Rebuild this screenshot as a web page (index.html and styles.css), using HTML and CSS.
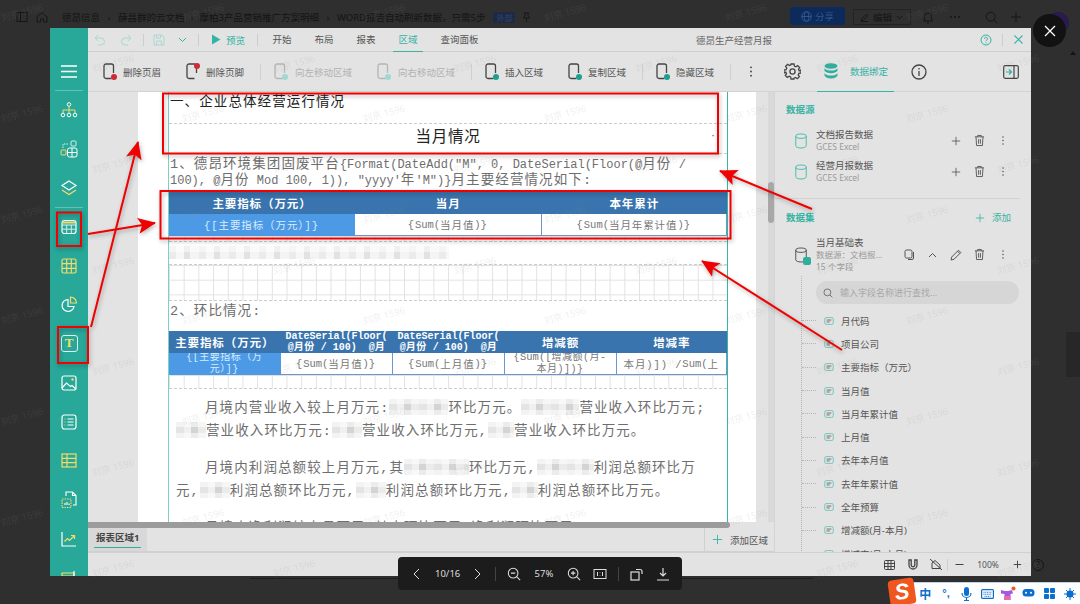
FILE: index.html
```html
<!DOCTYPE html>
<html lang="zh-CN">
<head>
<meta charset="utf-8">
<title>德昂生产经营月报</title>
<link rel="stylesheet" href="styles.css">
</head>
<body>
<svg class="sprite" width="0" height="0" aria-hidden="true">
  <defs>
    <symbol id="db" viewBox="0 0 16 18"><ellipse cx="8" cy="3.5" rx="6" ry="2.5" fill="none" stroke="currentColor"/><path d="M2 3.5v11c0 1.400 2.700 2.500 6 2.500s6-1.100 6-2.500v-11" fill="none" stroke="currentColor"/></symbol>
    <symbol id="plus" viewBox="0 0 12 12"><path d="M6 1v10M1 6h10" stroke="currentColor" fill="none"/></symbol>
    <symbol id="trash" viewBox="0 0 12 14"><path d="M1 3h10M4 3V1.500h4V3M2.200 3l.6 9.500h6.400l.6-9.500M5 5.500v5M7 5.500v5" stroke="currentColor" fill="none"/></symbol>
    <symbol id="dots" viewBox="0 0 4 14"><circle cx="2" cy="2.500" r="1" fill="currentColor"/><circle cx="2" cy="7" r="1" fill="currentColor"/><circle cx="2" cy="11.500" r="1" fill="currentColor"/></symbol>
    <symbol id="field" viewBox="0 0 12 10"><rect x=".7" y=".7" width="10.600" height="8.600" rx="1.800" fill="none" stroke="#5fc0b2"/><path d="M3 3.800h6M3 6.200h4" stroke="#555"/></symbol>
    <symbol id="doc" viewBox="0 0 14 18"><path d="M9 15.500H3.500a2 2 0 0 1-2-2V3a2 2 0 0 1 2-2H9a2 2 0 0 1 2 2v7" fill="none" stroke="currentColor" stroke-width="1.300"/></symbol>
    <symbol id="mag" viewBox="0 0 16 16"><circle cx="7" cy="7" r="5.500" fill="none" stroke="currentColor" stroke-width="1.200"/><path d="M11 11l4 4" stroke="currentColor" stroke-width="1.200"/></symbol>
    <pattern id="wm" width="181" height="101" patternUnits="userSpaceOnUse" x="-23" y="-12">
      <text class="wm-t" x="45" y="28" text-anchor="middle" transform="rotate(-15 45 25)">刘京 1596</text>
      <text class="wm-t" x="136" y="79" text-anchor="middle" transform="rotate(-15 136 76)">刘京 1596</text>
    </pattern>
    <marker id="head" viewBox="0 0 18 16" refX="17" refY="8" markerWidth="18" markerHeight="16" markerUnits="userSpaceOnUse" orient="auto"><path d="M18 8L0 0l4 8-4 8z" fill="#f00000"/></marker>
  </defs>
</svg>

<header class="topbar">
  <div class="top-ic first"><svg width="12" height="12" viewBox="0 0 12 12"><rect x="1" y="1.500" width="10" height="9" fill="none" stroke="#161616"/><path d="M4.500 1.500v9" stroke="#161616"/></svg></div>
  <div class="top-ic"><svg width="12" height="12" viewBox="0 0 12 12"><path d="M1 6l5-4.500L11 6v5H7.500V8h-3v3H1z" fill="none" stroke="#161616"/></svg></div>
  <nav class="crumbs"><span>德昂信息</span><i>›</i><span>薛昌群的云文档</span><i>›</i><span>摩柏3产品营销推广方案明细</span><i>›</i><span>WORD报告自动刷新数据，只需5步</span><b class="tag">外部</b><svg class="pin" width="9" height="10" viewBox="0 0 9 10" fill="none" stroke="#161616"><path d="M2 1h5M3 1v3L1.500 6h6L6 4V1M4.500 6v4"/></svg></nav>
  <div class="top-right">
    <div class="share"><svg width="11" height="11" viewBox="0 0 11 11" fill="none" stroke="#34548a"><circle cx="5.500" cy="5.500" r="4.800"/><ellipse cx="5.500" cy="5.500" rx="2.200" ry="4.800"/><path d="M.7 5.500h9.600"/></svg><span>分享</span></div>
    <div class="edit"><svg width="9" height="9" viewBox="0 0 9 9" fill="none" stroke="#161616"><path d="M1 8l.5-2L6.500 1 8 2.500 3 7.500zM1 8.500h7"/></svg><span>编辑</span><svg width="7" height="5" viewBox="0 0 7 5" fill="none" stroke="#161616"><path d="M1 1l2.500 2.500L6 1"/></svg></div>
    <svg class="bell" width="12" height="13" viewBox="0 0 12 13"><path d="M1.500 10c1-1 1-2.500 1-4.500a3.500 3.500 0 0 1 7 0c0 2 0 3.500 1 4.500zM5 12h2" fill="none" stroke="#161616"/></svg>
    <svg class="tdots" width="12" height="4" viewBox="0 0 12 4"><circle cx="2" cy="2" r="1" fill="#161616"/><circle cx="6" cy="2" r="1" fill="#161616"/><circle cx="10" cy="2" r="1" fill="#161616"/></svg>
    <svg class="tsearch" width="13" height="13"><use href="#mag" color="#161616"/></svg>
    <svg class="tplus" width="12" height="12"><use href="#plus" color="#161616"/></svg>
  </div>
</header>

<div class="avatar"></div>
<div class="closer"><svg width="12" height="12" viewBox="0 0 12 12"><path d="M1 1l10 10M11 1L1 11" stroke="#fff" stroke-width="1.300"/></svg></div>
<div class="side-tri"></div>
<div class="side-strip"></div>
<div class="help-out">?</div>
<div class="under-slider"></div>

<main class="window">
  <aside class="rail">
    <div class="rail-btn menu"><svg width="16" height="13" viewBox="0 0 16 13"><path d="M0 1h16M0 6.500h16M0 12h16" stroke="#fff" stroke-width="1.300"/></svg></div>
    <div class="rail-sep"></div>
    <div class="rail-btn"><svg width="18" height="16" viewBox="0 0 18 16" fill="none" stroke="#fff"><circle cx="9" cy="2.500" r="1.800"/><circle cx="3" cy="13" r="1.800"/><circle cx="9" cy="13" r="1.800"/><circle cx="15" cy="13" r="1.800"/><path d="M9 4.500v6.500M3 11V8h12v3" stroke="#f3dc6b"/></svg></div>
    <div class="rail-btn"><svg width="18" height="18" viewBox="0 0 18 18" fill="none" stroke="#d7efe9"><rect x="1" y="10" width="5" height="5" rx="1" stroke="#f3dc6b"/><rect x="11" y="1" width="5" height="5" rx="1"/><rect x="7.500" y="8" width="9.500" height="9" rx="2" stroke="#fff"/><path d="M12 8v9M7.500 12.500H17" stroke="#fff"/><path d="M3 8V4h5" stroke-dasharray="1.500 1"/></svg></div>
    <div class="rail-btn"><svg width="18" height="18" viewBox="0 0 18 18" fill="none"><path d="M9 2l7 4.500-7 4.500-7-4.500z" stroke="#fff" stroke-width="1.200"/><path d="M2 11l7 4.500 7-4.500" stroke="#f3dc6b" stroke-width="1.200"/></svg></div>
    <div class="rail-sep"></div>
    <div class="rail-btn"><svg width="16" height="16" viewBox="0 0 16 16" fill="none" stroke="#d7efe9"><rect x="1" y="1.500" width="14" height="13" rx="2.500" stroke="#fff" stroke-width="1.200"/><path d="M1 6h14M1 10.200h14M5.700 6v8.500M10.300 6v8.500"/><path d="M1.500 3.500h13" stroke="#f3dc6b" stroke-width="2"/></svg></div>
    <div class="rail-btn"><svg width="16" height="16" viewBox="0 0 16 16" fill="none" stroke="#f3dc6b" stroke-width="1.200"><rect x="1" y="1" width="14" height="14" rx="1.500"/><path d="M1 5.700h14M1 10.300h14M5.700 1v14M10.300 1v14"/></svg></div>
    <div class="rail-btn"><svg width="17" height="17" viewBox="0 0 17 17" fill="none" stroke-width="1.200"><path d="M7 3.500a6 6 0 1 0 6 7H7z" stroke="#fff"/><path d="M9.500 1a6 6 0 0 1 6 6h-6z" stroke="#f3dc6b"/></svg></div>
    <div class="rail-btn"><span class="t-ic">T</span></div>
    <div class="rail-btn"><svg width="16" height="16" viewBox="0 0 16 16" fill="none" stroke="#fff" stroke-width="1.200"><rect x="1" y="1" width="14" height="14" rx="2"/><path d="M1 13l4.500-5 4 3.500 1.500-1 4 3.500"/><circle cx="11.500" cy="4.500" r="1.200" fill="#f3dc6b" stroke="none"/></svg></div>
    <div class="rail-btn"><svg width="16" height="16" viewBox="0 0 16 16" fill="none" stroke="#fff" stroke-width="1.200"><rect x="1" y="1" width="14" height="14" rx="2.500"/><path d="M6.500 5H12.500M6.500 8H12.500M6.500 11H12.500" stroke-width="1"/><path d="M3.500 5h1M3.500 8h1M3.500 11h1" stroke="#f3dc6b"/></svg></div>
    <div class="rail-btn"><svg width="16" height="15" viewBox="0 0 16 15" fill="none" stroke="#f3dc6b" stroke-width="1.200"><rect x="1" y="1" width="14" height="13"/><path d="M1 5.300h14M1 9.700h14M6 1v13" /></svg></div>
    <div class="rail-btn"><svg width="16" height="18" viewBox="0 0 16 18" fill="none" stroke-width="1.100"><path d="M5 5V1h6.500L15 4.500V14h-3M11.500 1v3.500H15" stroke="#fff"/><rect x="1" y="8" width="9" height="8.500" stroke="#f3dc6b" stroke-dasharray="1.500 1"/><path d="M4 14v-2M6 14v-3M8 14v-1.500" stroke="#fff"/></svg></div>
    <div class="rail-btn"><svg width="16" height="16" viewBox="0 0 16 16" fill="none" stroke-width="1.200"><path d="M1 1v14h14" stroke="#fff"/><path d="M3.500 10.500l3-3 2 2 4.500-4.500M10 4.500h3.500V8" stroke="#f3dc6b"/></svg></div>
    <div class="rail-btn"><svg width="16" height="16" viewBox="0 0 16 16" fill="none" stroke-width="1.200"><path d="M1 3h12v3H1z" stroke="#f3dc6b"/><path d="M13 1v14" stroke="#fff"/></svg></div>
  </aside>

  <section class="main">
    <div class="titlebar">
      <span class="ti start dim"><svg width="12" height="12" viewBox="0 0 12 12" fill="none" stroke="currentColor"><path d="M4 1L1 4l3 3M1 4h6a3.500 3.500 0 0 1 0 7H4"/></svg></span>
      <span class="ti gap10 dim"><svg width="12" height="12" viewBox="0 0 12 12" fill="none" stroke="currentColor"><path d="M8 1l3 3-3 3M11 4H5a3.500 3.500 0 0 0 0 7h3"/></svg></span>
      <i class="bar m9"></i>
      <span class="ti gap7 dim"><svg width="12" height="12" viewBox="0 0 12 12" fill="none" stroke="currentColor"><path d="M1 1h8l2 2v8H1zM3.500 1v3h4V1M3.500 11V7h5v4"/></svg></span>
      <span class="ti gap7 teal"><svg width="9" height="6" viewBox="0 0 9 6" fill="none" stroke="currentColor"><path d="M1 1l3.500 3.500L8 1"/></svg></span>
      <i class="bar m8"></i>
      <span class="ti gap9 teal"><svg width="10" height="11" viewBox="0 0 10 11"><path d="M1 .5l8.500 5-8.500 5z" fill="currentColor"/></svg></span>
      <span class="preview">预览</span>
      <i class="bar m12"></i>
      <nav class="menu-tabs"><a>开始</a><a>布局</a><a>报表</a><a class="on">区域</a><a>查询面板</a></nav>
      <div class="doc-title">德昂生产经营月报</div>
      <span class="ti teal"><svg width="12" height="12" viewBox="0 0 12 12" fill="none" stroke="currentColor"><circle cx="6" cy="6" r="5"/><path d="M4.500 4.800a1.500 1.500 0 1 1 2.300 1.200c-.6.400-.8.700-.8 1.200M6 8.300v1"/></svg></span>
      <i class="bar m8"></i>
      <span class="ti gap7 teal"><svg width="9" height="9" viewBox="0 0 9 9"><path d="M.5.500l8 8M8.500.500l-8 8" stroke="currentColor" stroke-width="1.100"/></svg></span>
    </div>

    <div class="toolbar">
      <div class="tool first"><span class="tic dark"><svg width="15" height="18"><use href="#doc"/></svg><b class="bad low"></b></span><span>删除页眉</span></div>
      <div class="tool"><span class="tic dark"><svg width="15" height="18"><use href="#doc"/></svg><b class="bad high"></b></span><span>删除页脚</span></div>
      <i class="sep"></i>
      <div class="tool off wide"><span class="tic"><svg width="15" height="18"><use href="#doc"/></svg><b class="go"></b></span><span>向左移动区域</span></div>
      <div class="tool off wide"><span class="tic"><svg width="15" height="18"><use href="#doc"/></svg><b class="go"></b></span><span>向右移动区域</span></div>
      <i class="sep"></i>
      <div class="tool"><span class="tic dark"><svg width="15" height="18"><use href="#doc"/></svg><b class="ok"></b></span><span>插入区域</span></div>
      <div class="tool"><span class="tic dark"><svg width="15" height="18"><use href="#doc"/></svg><b class="ok"></b></span><span>复制区域</span></div>
      <i class="sep"></i>
      <div class="tool"><span class="tic dark"><svg width="15" height="18"><use href="#doc"/></svg><b class="ok"></b></span><span>隐藏区域</span></div>
      <i class="sep"></i>
      <span class="tic dark more"><svg width="4" height="13"><use href="#dots"/></svg></span>
      <span class="tic dark gear"><svg width="17" height="17" viewBox="0 0 17 17" fill="none" stroke="currentColor" stroke-width="1.300"><path d="M7 1h3l.4 2.100 1.500.7 1.800-1.200 2 2-1.200 1.800.7 1.500L17 7v3l-2.100.4-.7 1.500 1.200 1.800-2 2-1.800-1.200-1.500.7L10 16H7l-.4-2.100-1.500-.7-1.800 1.200-2-2 1.200-1.800-.7-1.500L0 10V7l2.100-.4.7-1.500-1.200-1.800 2-2 1.800 1.200 1.500-.7z"/><circle cx="8.500" cy="8.500" r="2.600"/></svg></span>
      <div class="bind"><svg width="14" height="16" viewBox="0 0 14 16"><ellipse cx="7" cy="3" rx="6.500" ry="2.800" fill="#2fae9e"/><path d="M.5 5.200c1 1.600 3.500 2.300 6.500 2.300s5.500-.7 6.500-2.300v2.600c-1 1.600-3.500 2.400-6.500 2.400S1.500 9.400.5 7.800zM.5 10.200c1 1.600 3.500 2.300 6.500 2.300s5.500-.7 6.500-2.300v2.600C12.500 14.400 10 15.500 7 15.500s-5.500-1.100-6.500-2.700z" fill="#2fae9e"/></svg><span>数据绑定</span></div>
      <span class="tic dark info"><svg width="16" height="16" viewBox="0 0 16 16" fill="none" stroke="currentColor" stroke-width="1.300"><circle cx="8" cy="8" r="7"/><path d="M8 7v5M8 4v1.500"/></svg></span>
      <span class="tic dark toggle"><svg width="16" height="14" viewBox="0 0 16 14" fill="none" stroke="currentColor" stroke-width="1.200"><rect x=".7" y=".7" width="14.600" height="12.600" rx="1.500"/><path d="M11 1v12"/><path d="M3 7h5M6 4.500L8.500 7 6 9.500" stroke="#2fae9e"/></svg></span>
    </div>

    <div class="workspace">
      <div class="left">
        <div class="canvas">
          <div class="page">
            <div class="region">
              <div class="row-h1">一、企业总体经营运行情况</div>
              <div class="row-h2">当月情况<span class="ell">··</span></div>
              <div class="formula">
                <div>1、德昂环境集团固废平台<span class="m">{Format(DateAdd("M", 0, DateSerial(Floor(@</span>月份<span class="m"> /</span></div>
                <div><span class="m">100), @</span>月份<span class="m"> Mod 100, 1)), "yyyy'</span>年<span class="m">'M")}</span>月主要经营情况如下:</div>
              </div>
              <div class="tbl t3">
                <div class="th">主要指标（万元）</div><div class="th">当月</div><div class="th">本年累计</div>
                <div class="td first-col">{[主要指标（万元）]}</div>
                <div class="td">{<span class="m">Sum(</span>当月值<span class="m">)</span>}</div>
                <div class="td">{<span class="m">Sum(</span>当月年累计值<span class="m">)</span>}</div>
              </div>
              <div class="grid g-short"></div>
              <div class="blur-row"><span class="mosaic"></span></div>
              <div class="grid g-tall"></div>
              <div class="row-plain">2、环比情况:</div>
              <div class="tbl t5">
                <div class="th">主要指标（万元）</div>
                <div class="th tight"><div><span class="m">DateSerial(Floor(</span><br><span class="m">@</span>月份<span class="m"> / 100)  @</span>月</div></div>
                <div class="th tight"><div><span class="m">DateSerial(Floor(</span><br><span class="m">@</span>月份<span class="m"> / 100)  @</span>月</div></div>
                <div class="th">增减额</div><div class="th">增减率</div>
                <div class="td first-col tight"><div>{[主要指标（万<br>元）]}</div></div>
                <div class="td">{<span class="m">Sum(</span>当月值<span class="m">)</span>}</div>
                <div class="td">{<span class="m">Sum(</span>上月值<span class="m">)</span>}</div>
                <div class="td tight"><div>{<span class="m">Sum([</span>增减额(月-<br>本月)])}</div></div>
                <div class="td">本月)]) / <span class="m">Sum(</span>上</div>
              </div>
              <div class="grid g-mini"></div>
              <div class="para">
                <div class="ln ind">月境内营业收入较上月万元:<span class="blur w59"></span>环比万元。<span class="blur w58"></span>营业收入环比万元;</div>
                <div class="ln"><span class="blur w30"></span>营业收入环比万元:<span class="blur w30"></span>营业收入环比万元,<span class="blur w26"></span>营业收入环比万元。</div>
              </div>
              <div class="para">
                <div class="ln ind">月境内利润总额较上月万元,其<span class="blur w65"></span>环比万元,<span class="blur w57"></span>利润总额环比万</div>
                <div class="ln">元,<span class="blur w30"></span>利润总额环比万元,<span class="blur w30"></span>利润总额环比万元,<span class="blur w26"></span>利润总额环比万元。</div>
              </div>
              <div class="para">
                <div class="ln ind">月境内净利润较上月万元,其中环比万元,净利润环比万元</div>
              </div>
            </div>
          </div>
          <div class="vscroll"><i></i></div>
        </div>
        <div class="hscroll"></div>
        <div class="tabs">
          <div class="tab">报表区域1</div>
          <div class="add"><svg width="11" height="11"><use href="#plus"/></svg><span>添加区域</span></div>
        </div>
      </div>

      <aside class="panel">
        <div class="p-head">数据源</div>
        <div class="src first">
          <svg class="p-db" width="14" height="16"><use href="#db"/></svg>
          <div class="src-t"><strong>文档报告数据</strong><small>GCES Excel</small></div>
          <div class="acts"><span><svg width="10" height="10"><use href="#plus"/></svg></span><span><svg width="11" height="13"><use href="#trash"/></svg></span><span><svg width="4" height="11"><use href="#dots"/></svg></span></div>
        </div>
        <div class="src">
          <svg class="p-db" width="14" height="16"><use href="#db"/></svg>
          <div class="src-t"><strong>经营月报数据</strong><small>GCES Excel</small></div>
          <div class="acts"><span><svg width="10" height="10"><use href="#plus"/></svg></span><span><svg width="11" height="13"><use href="#trash"/></svg></span><span><svg width="4" height="11"><use href="#dots"/></svg></span></div>
        </div>
        <div class="p-rule"></div>
        <div class="p-head split"><span>数据集</span><span class="p-add"><svg width="10" height="10"><use href="#plus"/></svg>添加</span></div>
        <div class="set">
          <span class="set-ic"><svg width="14" height="16"><use href="#db"/></svg><b></b></span>
          <div class="src-t"><strong>当月基础表</strong><small>数据源：文档报...</small><small>15 个字段</small></div>
          <div class="acts five">
            <span><svg width="11" height="11" viewBox="0 0 11 11" fill="none" stroke="currentColor"><rect x="1" y="1" width="7" height="8" rx="1.500"/><path d="M9.500 3v6a1.500 1.500 0 0 1-1.500 1.500H4"/></svg></span>
            <span><svg width="9" height="6" viewBox="0 0 9 6" fill="none" stroke="currentColor"><path d="M1 5l3.500-3.500L8 5"/></svg></span>
            <span><svg width="12" height="12" viewBox="0 0 12 12" fill="none" stroke="currentColor"><path d="M1 11l.7-3L8.500 1.200l2.300 2.300L4 10.300zM7.500 2.200l2.300 2.300"/></svg></span>
            <span><svg width="11" height="13"><use href="#trash"/></svg></span>
            <span><svg width="4" height="11"><use href="#dots"/></svg></span>
          </div>
        </div>
        <div class="tree">
          <div class="search"><svg width="10" height="10"><use href="#mag"/></svg><span>输入字段名称进行查找...</span></div>
          <ul class="fields">
            <li><i></i><svg width="10" height="8"><use href="#field"/></svg>月代码</li>
            <li><i></i><svg width="10" height="8"><use href="#field"/></svg>项目公司</li>
            <li><i></i><svg width="10" height="8"><use href="#field"/></svg>主要指标（万元）</li>
            <li><i></i><svg width="10" height="8"><use href="#field"/></svg>当月值</li>
            <li><i></i><svg width="10" height="8"><use href="#field"/></svg>当月年累计值</li>
            <li><i></i><svg width="10" height="8"><use href="#field"/></svg>上月值</li>
            <li><i></i><svg width="10" height="8"><use href="#field"/></svg>去年本月值</li>
            <li><i></i><svg width="10" height="8"><use href="#field"/></svg>去年年累计值</li>
            <li><i></i><svg width="10" height="8"><use href="#field"/></svg>全年预算</li>
            <li><i></i><svg width="10" height="8"><use href="#field"/></svg>增减额(月-本月)</li>
            <li><i></i><svg width="10" height="8"><use href="#field"/></svg>增减率(月-本月)</li>
          </ul>
        </div>
      </aside>
    </div>

    <div class="status">
      <span class="st"><svg width="11" height="10" viewBox="0 0 11 10" fill="none" stroke="#444"><rect x=".5" y=".5" width="10" height="9" rx="1"/><path d="M.5 3.500h10M.5 6.500h10M4 .5v9M7 .5v9"/></svg></span>
      <span class="st"><svg width="10" height="11" viewBox="0 0 10 11" fill="none" stroke="#444" stroke-width="1.300"><path d="M1 1v5a4 4 0 0 0 8 0V1H6.800v5a1.800 1.800 0 0 1-3.600 0V1z"/></svg></span>
      <span class="st"><svg width="12" height="11" viewBox="0 0 12 11" fill="none" stroke="#444"><path d="M2 9.500h8V6L5 1.500 2 4zM0 0l12 11"/></svg></span>
      <i class="st-sep"></i>
      <span class="st small"><svg width="9" height="9"><path d="M.5 4.500h8" stroke="#444"/></svg></span>
      <span class="pct">100%</span>
      <span class="st small"><svg width="9" height="9" viewBox="0 0 12 12"><path d="M6 1v10M1 6h10" stroke="#444" stroke-width="1.300"/></svg></span>
    </div>
  </section>
</main>

<svg class="overlay" width="1080" height="604" viewBox="0 0 1080 604" aria-hidden="true">
  <rect width="1080" height="604" fill="url(#wm)"/>
  <g class="marks" fill="none" stroke="#f00000" stroke-width="2">
    <rect x="163" y="93.500" width="555" height="60"/>
    <rect x="160.500" y="191" width="570" height="47.500"/>
    <rect x="57" y="212.500" width="24" height="33.500"/>
    <rect x="58" y="327" width="30" height="36"/>
    <path d="M91 327L138 142" marker-end="url(#head)"/>
    <path d="M88 234L155 223" marker-end="url(#head)"/>
    <path d="M812 209L720 171" marker-end="url(#head)"/>
    <path d="M842 350L702 261" marker-end="url(#head)"/>
  </g>
</svg>

<div class="viewer">
  <svg width="16" height="12" viewBox="0 0 16 12" fill="none" stroke="#ddd"><path d="M10 1L5 6l5 5"/></svg>
  <span class="pg">10/16</span>
  <svg width="16" height="12" viewBox="0 0 16 12" fill="none" stroke="#ddd"><path d="M6 1l5 5-5 5"/></svg>
  <i></i>
  <svg width="16" height="14" viewBox="0 0 16 16" fill="none" stroke="#ddd" stroke-width="1.200"><circle cx="7" cy="7" r="5.500"/><path d="M11 11l4 4M4.500 7h5"/></svg>
  <span class="pct2">57%</span>
  <svg width="16" height="14" viewBox="0 0 16 16" fill="none" stroke="#ddd" stroke-width="1.200"><circle cx="7" cy="7" r="5.500"/><path d="M11 11l4 4M4.500 7h5M7 4.500v5"/></svg>
  <svg width="16" height="12" viewBox="0 0 16 12" fill="none" stroke="#ddd"><rect x="2" y="1.500" width="12" height="9"/><path d="M5.500 4v4M8 4.500v.5M8 7v.5M10.500 4v4"/></svg>
  <i></i>
  <svg width="16" height="14" viewBox="0 0 16 14" fill="none" stroke="#ddd" stroke-width="1.200"><rect x="2" y="5" width="8" height="8"/><path d="M7 2.500h4a2 2 0 0 1 2 2V7"/></svg>
  <svg width="16" height="14" viewBox="0 0 16 14" fill="none" stroke="#ddd" stroke-width="1.200"><path d="M8 1v8M5 6l3 3 3-3M2 13h12"/></svg>
</div>

<div class="ime">
  <span class="s-logo">S</span>
  <span class="zh">中</span>
  <span class="punc">°,</span>
  <svg width="11" height="14" viewBox="0 0 11 14"><rect x="3" y="0" width="5" height="9" rx="2.500" fill="#0b6fd0"/><path d="M1 6a4.500 4.500 0 0 0 9 0M5.500 11v2.500M3 13.500h5" fill="none" stroke="#0b6fd0" stroke-width="1.200"/></svg>
  <svg width="13" height="10" viewBox="0 0 13 10"><rect x=".6" y=".6" width="11.800" height="8.800" rx="1" fill="none" stroke="#0b6fd0" stroke-width="1.200"/><path d="M2.500 3.200h8M2.500 5.200h8M3.500 7.300h6" stroke="#0b6fd0" stroke-dasharray="1 .7"/></svg>
  <svg width="16" height="15" viewBox="0 0 16 15"><path d="M1 4l3.500 1h4L12 4l1 3.500-2.500.5v6h-6V8L1 7.500z" fill="#a45ae0"/><path d="M4 10h6.500v4H4z" fill="#e66bb0"/><circle cx="13.500" cy="2.500" r="2" fill="#f0561d"/></svg>
  <svg width="13" height="11" viewBox="0 0 13 11"><rect x=".5" y="1" width="12" height="7.500" rx="3.500" fill="#0b6fd0"/><circle cx="4" cy="4.700" r="1" fill="#fff"/><circle cx="9" cy="4.700" r="1" fill="#fff"/></svg>
  <svg width="11" height="11" viewBox="0 0 11 11"><rect width="5" height="5" rx="1" fill="#0b6fd0"/><rect x="6" width="5" height="5" rx="1" fill="#0b6fd0"/><rect y="6" width="5" height="5" rx="1" fill="#0b6fd0"/><rect x="6" y="6" width="5" height="5" rx="1" fill="#0b6fd0"/></svg>
  <svg width="12" height="12" viewBox="0 0 12 12"><circle cx="6" cy="6" r="3.500" fill="#0b6fd0"/><path d="M6 0v12M0 6h12M2 2l8 8M10 2l-8 8" stroke="#0b6fd0"/></svg>
</div>
</body>
</html>
```

FILE: styles.css
```css
* { box-sizing: border-box; }
html, body { margin: 0; padding: 0; }
body {
  width: 1080px; height: 604px; overflow: hidden; position: relative;
  background: #2f2f2f;
  font-family: "Noto Sans", "Noto Sans CJK SC", sans-serif;
  font-size: 9.5px; color: #555;
}
.sprite { position: absolute; }
.wm-t { font-size: 9.500px; fill: #808080; fill-opacity: .13; font-family: "Noto Sans", "Noto Sans CJK SC", sans-serif; }

/* dimmed page behind the viewer */
.topbar { height: 28px; display: flex; align-items: center; padding-top: 6px; color: #141414; }
.top-ic { width: 20px; display: flex; justify-content: center; }
.top-ic.first { margin-left: 12px; }
.crumbs { margin-left: 10px; display: flex; align-items: center; white-space: nowrap; }
.crumbs i { font-style: normal; width: 18px; text-align: center; }
.crumbs i:nth-of-type(2) { width: 15px; }
.tag { margin-left: 8px; padding: 0 3px; background: #1e2a44; color: #2d4470; font-weight: 400; font-size: 8px; border-radius: 2px; }
.pin { margin-left: 7px; }
.top-right { margin-left: auto; display: flex; align-items: center; }
.share { width: 55px; height: 18px; margin-top: -2px; background: #0c2a5c; color: #34548a; border-radius: 3px; display: flex; align-items: center; gap: 3px; padding-left: 11px; }
.edit { width: 58px; height: 16px; margin-left: 8px; border: 1px solid #242424; display: flex; align-items: center; gap: 4px; padding-left: 6px; }
.bell { margin-left: 11px; }
.tdots { margin-left: 15px; }
.tsearch { margin-left: 24px; }
.tplus { margin-left: 12px; margin-right: 58px; }
.avatar { position: absolute; left: 1047px; top: 12px; width: 22px; height: 22px; border-radius: 50%; background: #2a1a4e; }
.closer { position: absolute; left: 1033px; top: 14px; width: 33px; height: 33px; border-radius: 50%; background: #121212; display: flex; align-items: center; justify-content: center; }
.side-tri { position: absolute; left: 1070px; top: 51px; border: 3.5px solid transparent; border-top: 0; border-bottom: 4px solid #141414; }
.side-strip { position: absolute; left: 1066px; top: 332px; width: 14px; height: 45px; background: #272727; }
.help-out { position: absolute; left: 1032px; top: 559px; width: 12px; height: 12px; border: 1px solid #151515; border-radius: 50%; color: #151515; font-size: 8px; line-height: 10px; text-align: center; }
.under-slider { position: absolute; left: 250px; top: 578px; width: 563px; height: 1px; background: #1e1e1e; }

/* editor window */
.window { position: absolute; left: 50px; top: 28px; width: 981px; height: 548px; display: flex; overflow: hidden; background: #e3e3e3; }
.rail { width: 38px; flex: none; background: #27a899; padding-top: 24px; overflow: hidden; }
.rail-btn { height: 39px; display: flex; align-items: center; justify-content: center; }
.rail-btn.menu { height: 38px; }
.rail-sep { height: 1px; margin: 0 5px -1px; background: rgba(255,255,255,.28); }
.t-ic { width: 17px; height: 17px; border: 1.200px solid #e4f3f0; border-radius: 3px; color: #f3dc6b; font: 700 13px/14px "Liberation Serif", serif; text-align: center; }

.main { flex: 1; min-width: 0; display: flex; flex-direction: column; }
.titlebar { height: 24px; flex: none; display: flex; align-items: center; padding-left: 4px; padding-right: 5px; border-bottom: 1px solid #cfcfcf; }
.ti { width: 16px; height: 16px; display: flex; align-items: center; justify-content: center; flex: none; }
.dim { color: #a9d8d1; }
.teal { color: #35b3a3; }
.gap10 { margin-left: 10px; }
.gap7 { margin-left: 7px; }
.gap9 { margin-left: 9px; }
.bar { width: 1px; height: 12px; background: #cdcdcd; flex: none; }
.m9 { margin-left: 9px; }
.m8 { margin-left: 8px; }
.m12 { margin-left: 12px; }
.preview { margin-left: 2px; color: #35b3a3; }
.menu-tabs { display: flex; gap: 12px; margin-left: 9px; height: 24px; }
.menu-tabs a { padding: 0 5.500px; line-height: 23px; white-space: nowrap; }
.menu-tabs a.on { color: #35b3a3; border-bottom: 1.500px solid #35b3a3; }
.doc-title { flex: 1; text-align: center; padding-left: 6px; color: #666; }

.toolbar { height: 40px; flex: none; display: flex; align-items: center; padding-left: 11px; border-bottom: 1px solid #d2d2d2; }
.tool { display: flex; align-items: center; gap: 4px; margin-left: 21px; white-space: nowrap; }
.tool.first { margin-left: 0; }
.tool.wide { gap: 5px; }
.tool.off { color: #b2b2b2; }
.sep { width: 1px; height: 16px; background: #d0d0d0; margin-left: 16px; flex: none; }
.sep + .tool { margin-left: 9px; }
.tic { position: relative; width: 20px; height: 20px; display: flex; align-items: center; justify-content: center; flex: none; color: #b5b5b5; }
.tic.dark { color: #444; }
.tic b { position: absolute; width: 6px; height: 6px; border-radius: 50%; right: 2px; bottom: 2px; }
.tic .bad { background: #d02a33; }
.tic .bad.high { top: 1px; bottom: auto; }
.tic .go { background: #9fd9d1; }
.tic .ok { background: #1f9d8f; }
.more { margin-left: 10px; }
.gear { margin-left: 21px; }
.bind { margin-left: 15px; width: 77px; height: 40px; display: flex; align-items: center; gap: 12px; padding-left: 7px; color: #35b3a3; border-bottom: 1.500px solid #35b3a3; }
.info { margin-left: 15px; }
.toggle { margin-left: auto; margin-right: 10px; }

.workspace { flex: 1; min-height: 0; display: flex; }
.left { width: 686px; flex: none; display: flex; flex-direction: column; }
.canvas { flex: 1; min-height: 0; display: flex; overflow: hidden; }
.page { width: 618px; margin-left: 50px; background: #fff; padding-left: 30px; overflow: hidden; flex: none; }
.vscroll { margin-left: auto; width: 6px; background: #d9d9d9; position: relative; }
.vscroll i { display: block; width: 6px; height: 41px; margin-top: 90px; background: #a8a8a8; border-radius: 3px; }
.hscroll { height: 6px; flex: none; background: #9c9c9c; margin-right: 44px; border-radius: 0 3px 3px 0; }
.tabs { height: 24px; flex: none; display: flex; border-bottom: 1px solid #d0d0d0; }
.tab { width: 59px; height: 23px; background: #d8d8d8; padding-left: 8px; line-height: 20px; font-weight: 700; color: #444; position: relative; }
.tab::after { content: ""; position: absolute; left: 6px; right: 6px; bottom: 3px; height: 1px; background: #2fae9e; }
.add { margin-left: auto; width: 70px; display: flex; align-items: center; gap: 7px; padding-left: 7px; border-left: 1px solid #d0d0d0; white-space: nowrap; color: #35b3a3; }
.add span { color: #555; }

/* report page */
.region {
  width: 560px; height: 440px; border-left: 1px solid #7fd0c4; border-right: 1px solid #36b7a6;
  font-family: "Liberation Mono", "Noto Sans CJK SC", monospace;
  font-size: 13.500px; letter-spacing: 1.100px; color: #6e6e6e; overflow: hidden;
}
.m { font-family: "Liberation Mono", monospace; font-size: 12px; letter-spacing: 0; white-space: pre; }
.row-h1 { height: 32px; padding: 3px 0 0 1px; line-height: 15px; color: #222; border-bottom: 1px dashed #ccc; white-space: nowrap; }
.row-h2 { height: 30px; position: relative; text-align: center; font-size: 15.500px; letter-spacing: .8px; line-height: 28px; color: #222; border-bottom: 1px dashed #ccc; }
.ell { position: absolute; right: 6px; top: -2px; font-size: 9px; letter-spacing: 0; color: #555; }
.formula { height: 38px; padding: 3px 0 0 1px; line-height: 15px; white-space: nowrap; }
.tbl { display: grid; grid-template-rows: 22px 22px; font-size: 11.500px; letter-spacing: .9px; }
.t3 { grid-template-columns: 186px 186.500px 1fr; }
.t5 { grid-template-columns: 111.500px 112px 112px 112px 1fr; }
.th, .td { display: flex; align-items: center; justify-content: center; text-align: center; overflow: hidden; white-space: nowrap; }
.th { background: #3a74ae; color: #fff; font-weight: 700; }
.td { border: solid #6d97c8; border-width: 0 1px 1px 0; background: #fff; font-size: 10.500px; color: #777; }
.td.first-col { background: #4c99e6; color: #d8ecff; border-color: #4c99e6; }
.tight { line-height: 11.500px; font-size: 10px; letter-spacing: .5px; }
.th .m { font-size: 10px; }
.td .m { font-size: 10.500px; }
.grid { background-color: #fff; background-image: linear-gradient(#e2e2e2 1px, transparent 1px), linear-gradient(90deg, #e2e2e2 1px, transparent 1px); background-size: 14.700px 14.700px; border-bottom: 1px dashed #ccc; }
.g-short { height: 6px; }
.g-tall { height: 37px; border-top: 1px dashed #ccc; }
.g-mini { height: 14px; }
.blur-row { height: 22px; padding-top: 4px; }
.mosaic { display: block; width: 280px; height: 13px; background: linear-gradient(rgba(255,255,255,.5) 6px, transparent 6px), repeating-linear-gradient(90deg, #ebebeb 0 7px, #f7f7f7 7px 15px, #e2e2e2 15px 21px, #f4f4f4 21px 30px); }
.row-plain { height: 30px; padding: 3px 0 0 1px; line-height: 15px; white-space: nowrap; }
.para { padding-top: 14px; }
.g-mini + .para { padding-top: 8px; }
.ln { height: 23px; line-height: 23px; padding-left: 7px; letter-spacing: 1.100px; white-space: nowrap; }
.ln.ind { padding-left: 36px; }
.blur { display: inline-block; height: 16px; vertical-align: -3px; background: linear-gradient(rgba(255,255,255,.55) 5px, transparent 5px, transparent 11px, rgba(255,255,255,.55) 11px), repeating-linear-gradient(90deg, #e4e4e4 0 8px, #f0f0f0 8px 15px, #d4d4d4 15px 22px, #ebebeb 22px 30px); }
.w26 { width: 26px; } .w30 { width: 30px; } .w57 { width: 57px; } .w58 { width: 58px; } .w59 { width: 59px; } .w65 { width: 65px; }

/* right panel */
.panel { flex: 1; min-width: 0; overflow: hidden; border-left: 1px solid #d4d4d4; }
.p-head { margin: 11px 0 0 11px; height: 14px; line-height: 14px; color: #35b3a3; font-weight: 700; }
.p-head.split { display: flex; justify-content: space-between; margin-top: 12px; margin-right: 20px; }
.p-add { display: flex; align-items: center; gap: 7px; font-weight: 400; }
.src { display: flex; align-items: center; height: 31px; margin-left: 19px; }
.src.first { margin-top: 8px; }
.p-db { color: #3cb8a8; margin-right: 8px; flex: none; }
.src-t { display: flex; flex-direction: column; flex: 1; min-width: 0; }
.src-t strong { font-weight: 400; color: #555; font-size: 9.500px; line-height: 13px; }
.src-t small { font-size: 8.500px; color: #9a9a9a; line-height: 12px; white-space: nowrap; }
.acts { display: flex; color: #555; margin-right: 16px; flex: none; }
.acts span { width: 23.500px; display: flex; align-items: center; justify-content: center; }
.p-rule { height: 1px; margin: 11px 11px 0 0; background: #d2d2d2; }
.set { display: flex; align-items: center; height: 37px; margin: 11px 0 0 19px; }
.set-ic { position: relative; width: 14px; height: 16px; margin-right: 8px; color: #444; flex: none; }
.set-ic b { position: absolute; right: -3px; bottom: -2px; width: 8px; height: 8px; border-radius: 2px; background: #2fae9e; }
.tree { margin: 3px 0 0 26px; padding: 5px 0 0 14px; border-left: 1px dotted #b5b5b5; }
.search { width: 203px; height: 23px; border-radius: 12px; background: #d6d6d6; display: flex; align-items: center; gap: 7px; padding-left: 7px; color: #555; }
.search span { color: #a8a8a8; font-size: 9px; }
.fields { list-style: none; margin: 5px 0 0 -14px; padding: 0; }
.fields li { height: 23.300px; display: flex; align-items: center; color: #555; white-space: nowrap; }
.fields i { width: 14px; border-top: 1px dotted #b5b5b5; margin-right: 8px; }
.fields svg { margin-right: 7px; flex: none; }

/* status */
.status { height: 24px; flex: none; display: flex; align-items: center; justify-content: flex-end; padding-right: 3px; border-top: 1px solid #d0d0d0; background: #e3e3e3; }
.st { width: 23px; display: flex; align-items: center; justify-content: center; }
.st.small { width: 22px; }
.st-sep { width: 1px; height: 12px; background: #cfcfcf; }
.pct { width: 36px; text-align: center; font-size: 8.500px; color: #555; }

.overlay { position: absolute; left: 0; top: 0; pointer-events: none; }
.marks { filter: drop-shadow(1px 2px 2px rgba(0,0,0,.3)); }

/* viewer */
.viewer { position: absolute; left: 398px; top: 557px; width: 284px; height: 33px; background: #1c1c1c; border-radius: 4px; display: flex; align-items: center; gap: 10px; padding-left: 11px; color: #ddd; }
.viewer i { width: 1px; height: 14px; background: #444; flex: none; }
.viewer svg { flex: none; }
.pg { width: 24px; text-align: center; white-space: nowrap; font-size: 9.500px; }
.pct2 { width: 24px; text-align: center; font-size: 9.500px; }

/* IME */
.ime { position: absolute; left: 908px; top: 582px; width: 172px; height: 22px; background: #fff; border: 1px solid #bcd4ee; border-right: 0; border-bottom: 0; display: grid; grid-template-columns: repeat(8, 20.700px); align-items: center; justify-items: center; padding-left: 6px; }
.s-logo { position: absolute; left: -20px; top: -4px; width: 26px; height: 26px; background: #f0561d; border-radius: 4px; transform: rotate(-8deg); color: #fff; font: italic 700 22px/26px "Liberation Sans", sans-serif; text-align: center; }
.zh { color: #0b6fd0; font: 700 12px/1 "Noto Sans CJK SC", sans-serif; }
.punc { color: #0b6fd0; font: 700 11px/1 "Liberation Sans", sans-serif; }
```
